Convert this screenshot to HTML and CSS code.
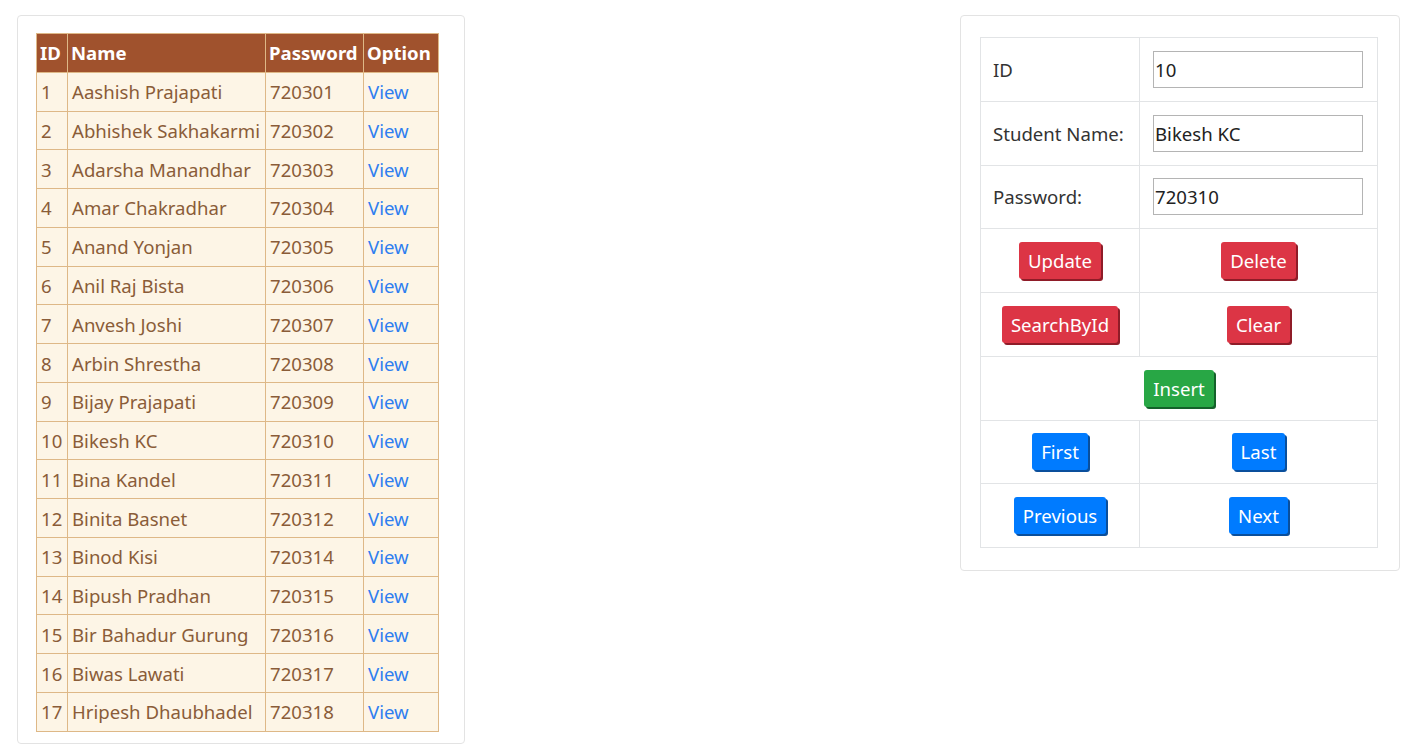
FILE: index.html
```html
<!DOCTYPE html>
<html>
<head>
<meta charset="utf-8">
<link rel="stylesheet" href="styles.css">
</head>
<body>
<div class="page">
  <div class="card list-card">
    <table class="students">
      <colgroup><col class="c-id"><col class="c-name"><col class="c-pw"><col class="c-opt"></colgroup>
      <thead>
        <tr><th>ID</th><th>Name</th><th>Password</th><th>Option</th></tr>
      </thead>
      <tbody>
        <tr><td>1</td><td>Aashish Prajapati</td><td>720301</td><td><a href="#">View</a></td></tr>
        <tr><td>2</td><td>Abhishek Sakhakarmi</td><td>720302</td><td><a href="#">View</a></td></tr>
        <tr><td>3</td><td>Adarsha Manandhar</td><td>720303</td><td><a href="#">View</a></td></tr>
        <tr><td>4</td><td>Amar Chakradhar</td><td>720304</td><td><a href="#">View</a></td></tr>
        <tr><td>5</td><td>Anand Yonjan</td><td>720305</td><td><a href="#">View</a></td></tr>
        <tr><td>6</td><td>Anil Raj Bista</td><td>720306</td><td><a href="#">View</a></td></tr>
        <tr><td>7</td><td>Anvesh Joshi</td><td>720307</td><td><a href="#">View</a></td></tr>
        <tr><td>8</td><td>Arbin Shrestha</td><td>720308</td><td><a href="#">View</a></td></tr>
        <tr><td>9</td><td>Bijay Prajapati</td><td>720309</td><td><a href="#">View</a></td></tr>
        <tr><td>10</td><td>Bikesh KC</td><td>720310</td><td><a href="#">View</a></td></tr>
        <tr><td>11</td><td>Bina Kandel</td><td>720311</td><td><a href="#">View</a></td></tr>
        <tr><td>12</td><td>Binita Basnet</td><td>720312</td><td><a href="#">View</a></td></tr>
        <tr><td>13</td><td>Binod Kisi</td><td>720314</td><td><a href="#">View</a></td></tr>
        <tr><td>14</td><td>Bipush Pradhan</td><td>720315</td><td><a href="#">View</a></td></tr>
        <tr><td>15</td><td>Bir Bahadur Gurung</td><td>720316</td><td><a href="#">View</a></td></tr>
        <tr><td>16</td><td>Biwas Lawati</td><td>720317</td><td><a href="#">View</a></td></tr>
        <tr><td>17</td><td>Hripesh Dhaubhadel</td><td>720318</td><td><a href="#">View</a></td></tr>
      </tbody>
    </table>
  </div>

  <div class="card form-card">
    <table class="form">
      <colgroup><col class="c-label"><col class="c-field"></colgroup>
      <tr><td class="label">ID</td><td><input class="field" type="text" value="10"></td></tr>
      <tr><td class="label">Student Name:</td><td><input class="field" type="text" value="Bikesh KC"></td></tr>
      <tr><td class="label">Password:</td><td><input class="field" type="text" value="720310"></td></tr>
      <tr><td class="center"><button class="btn red">Update</button></td><td class="center"><button class="btn red">Delete</button></td></tr>
      <tr><td class="center"><button class="btn red">SearchById</button></td><td class="center"><button class="btn red">Clear</button></td></tr>
      <tr><td class="center" colspan="2"><button class="btn green">Insert</button></td></tr>
      <tr><td class="center"><button class="btn blue">First</button></td><td class="center"><button class="btn blue">Last</button></td></tr>
      <tr><td class="center"><button class="btn blue">Previous</button></td><td class="center"><button class="btn blue">Next</button></td></tr>
    </table>
  </div>
</div>
</body>
</html>
```

FILE: styles.css
```css
* { box-sizing: border-box; }

body {
  margin: 0;
  background: #ffffff;
  font-family: "Segoe UI", "Noto Sans", "Open Sans", sans-serif;
  font-size: 18.6px;
}

.page {
  display: flex;
  justify-content: space-between;
  align-items: flex-start;
  padding: 15px 26px 0 17px;
}

.card {
  background: #fff;
  border: 1px solid #e3e3e3;
  border-radius: 4px;
}

.list-card {
  width: 448px;
  padding: 17px 18px 11px 18px;
}

.students {
  border-collapse: collapse;
  table-layout: fixed;
  width: 402px;
}

.c-id { width: 31px; }
.c-name { width: 198px; }
.c-pw { width: 98px; }
.c-opt { width: 75px; }

.students th,
.students td {
  border: 1px solid #deb887;
  padding: 0 4px;
  height: 38.78px;
  text-align: left;
  white-space: nowrap;
  overflow: hidden;
}

.students th {
  background: #a0522d;
  color: #ffffff;
  font-weight: 700;
  padding: 0 3px;
}

.students td {
  background: #fdf5e6;
  color: #8a5c38;
}

.students a {
  color: #2f7ef0;
  text-decoration: none;
}

.form-card {
  width: 440px;
  padding: 21px 22px 22px 19px;
}

.form {
  border-collapse: collapse;
  table-layout: fixed;
  width: 397px;
}

.c-label { width: 159px; }
.c-field { width: 238px; }

.form td {
  border: 1px solid #e2e4e6;
  height: 63.75px;
  padding: 0 13px;
  color: #333;
}

.form td.label { padding: 0 0 0 12px; white-space: nowrap; }
.form td.center { text-align: center; padding: 0; }

.field {
  display: block;
  width: 210px;
  height: 37px;
  border: 1px solid #b4b4b4;
  padding: 0 1px;
  font-family: inherit;
  font-size: 18.6px;
  color: #222;
  background: #fff;
}

.btn {
  height: 37px;
  padding: 0 9px;
  border: none;
  border-radius: 3px;
  font-family: inherit;
  font-size: 18.6px;
  color: #fff;
  vertical-align: middle;
}

.btn.red { background: #dc3545; box-shadow: 2px 2px 0 #8f1c28; }
.btn.green { background: #28a745; box-shadow: 2px 2px 0 #14612a; }
.btn.blue { background: #007bff; box-shadow: 2px 2px 0 #0a4f9c; }
```
